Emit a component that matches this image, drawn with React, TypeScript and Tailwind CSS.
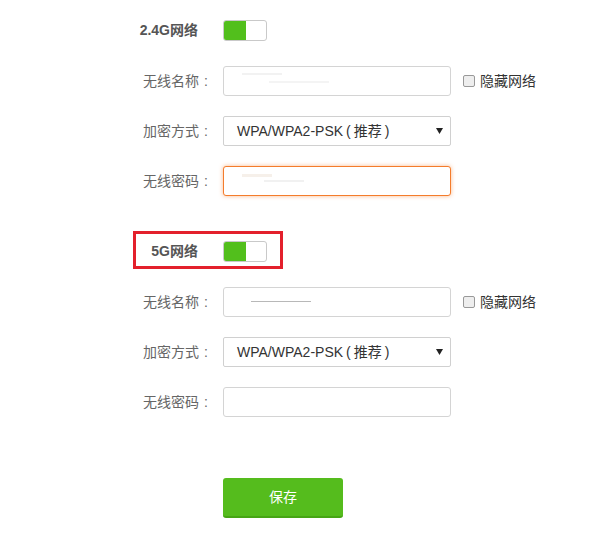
import React from 'react';

const font = "font-['Liberation_Sans','Noto_Sans_CJK_SC',sans-serif]";

function Toggle() {
  return (
    <div className="flex h-[21px] w-[44px] overflow-hidden rounded-[3px] border border-[#c9c9c9] bg-white">
      <div className="h-full w-[22px] bg-[#52bf1c]" />
    </div>
  );
}

function Label({ text }: { text: string }) {
  return (
    <div className="flex w-[83px] shrink-0 justify-end text-[14px] text-[#666]">
      <span>{text}</span>
      <span className="w-[14px] text-center">:</span>
    </div>
  );
}

function Row({ children, className = '' }: { children: React.ReactNode; className?: string }) {
  return <div className={`flex h-[30px] items-center gap-[10px] ${className}`}>{children}</div>;
}

function TextInput({ focused, smudge }: { focused?: boolean; smudge?: React.ReactNode }) {
  return (
    <div
      className={`relative h-[30px] w-[228px] rounded-[3px] border bg-white ${
        focused
          ? 'border-[#f47c2c] shadow-[0_0_4px_rgba(244,124,44,0.55)]'
          : 'border-[#d4d4d4]'
      }`}
    >
      {smudge}
    </div>
  );
}

function Select() {
  return (
    <div className="flex h-[30px] w-[228px] items-center justify-between rounded-[2px] border border-[#d0d0d0] bg-white pl-[13px] pr-[7px]">
      <span className="text-[14px] text-[#333]">
        WPA/WPA2-PSK<span className="mx-[3px]">(</span>推荐<span className="mx-[3px]">)</span>
      </span>
      <svg width="7" height="6" viewBox="0 0 7 6">
        <path d="M0 0h7L3.5 6z" fill="#222" />
      </svg>
    </div>
  );
}

function HideCheck() {
  return (
    <label className="ml-[2px] flex items-center gap-[5px] text-[14px] text-[#333]">
      <span className="h-[12px] w-[12px] rounded-[2px] border border-[#999] bg-[#eee]" />
      隐藏网络
    </label>
  );
}

function Section({ title, highlight, first }: { title: string; highlight?: boolean; first?: boolean }) {
  return (
    <div className="flex flex-col">
      <div className="relative">
        <Row>
          <div className="w-[83px] shrink-0 pr-[15px] text-right text-[14px] font-bold text-[#555]">{title}</div>
          <Toggle />
        </Row>
        {highlight && (
          <div className="absolute left-[3px] top-[-5px] h-[38px] w-[150px] border-[3px] border-[#e3202c]" />
        )}
      </div>
      <Row className="mt-[21px]">
        <Label text="无线名称" />
        <TextInput
          smudge={
            first ? (
              <>
                <div className="absolute left-[18px] top-[6px] h-[2px] w-[40px] bg-[#f2f2f2]" />
                <div className="absolute left-[45px] top-[14px] h-[2px] w-[60px] bg-[#f4f4f4]" />
              </>
            ) : (
              <div className="absolute left-[27px] top-[13px] h-px w-[60px] bg-[#b8b8b8]" />
            )
          }
        />
        <HideCheck />
      </Row>
      <Row className="mt-[20px]">
        <Label text="加密方式" />
        <Select />
      </Row>
      <Row className="mt-[20px]">
        <Label text="无线密码" />
        <TextInput
          focused={first}
          smudge={
            first ? (
              <>
                <div className="absolute left-[18px] top-[7px] h-[3px] w-[30px] bg-[#f6f0ea]" />
                <div className="absolute left-[40px] top-[13px] h-[2px] w-[40px] bg-[#f1f1f1]" />
              </>
            ) : null
          }
        />
      </Row>
    </div>
  );
}

export default function App() {
  return (
    <div className={`h-[533px] w-[600px] bg-white ${font}`}>
      <div className="ml-[130px] flex flex-col pt-[15px]">
        <Section title="2.4G网络" first />
        <div className="mt-[40px]">
          <Section title="5G网络" highlight />
        </div>
        <div className="mt-[61px] pl-[93px]">
          <button className="h-[40px] w-[120px] rounded-[3px] border-b-2 border-[#46a514] bg-[#55bc1d] text-[14px] text-white">
            保存
          </button>
        </div>
      </div>
    </div>
  );
}
